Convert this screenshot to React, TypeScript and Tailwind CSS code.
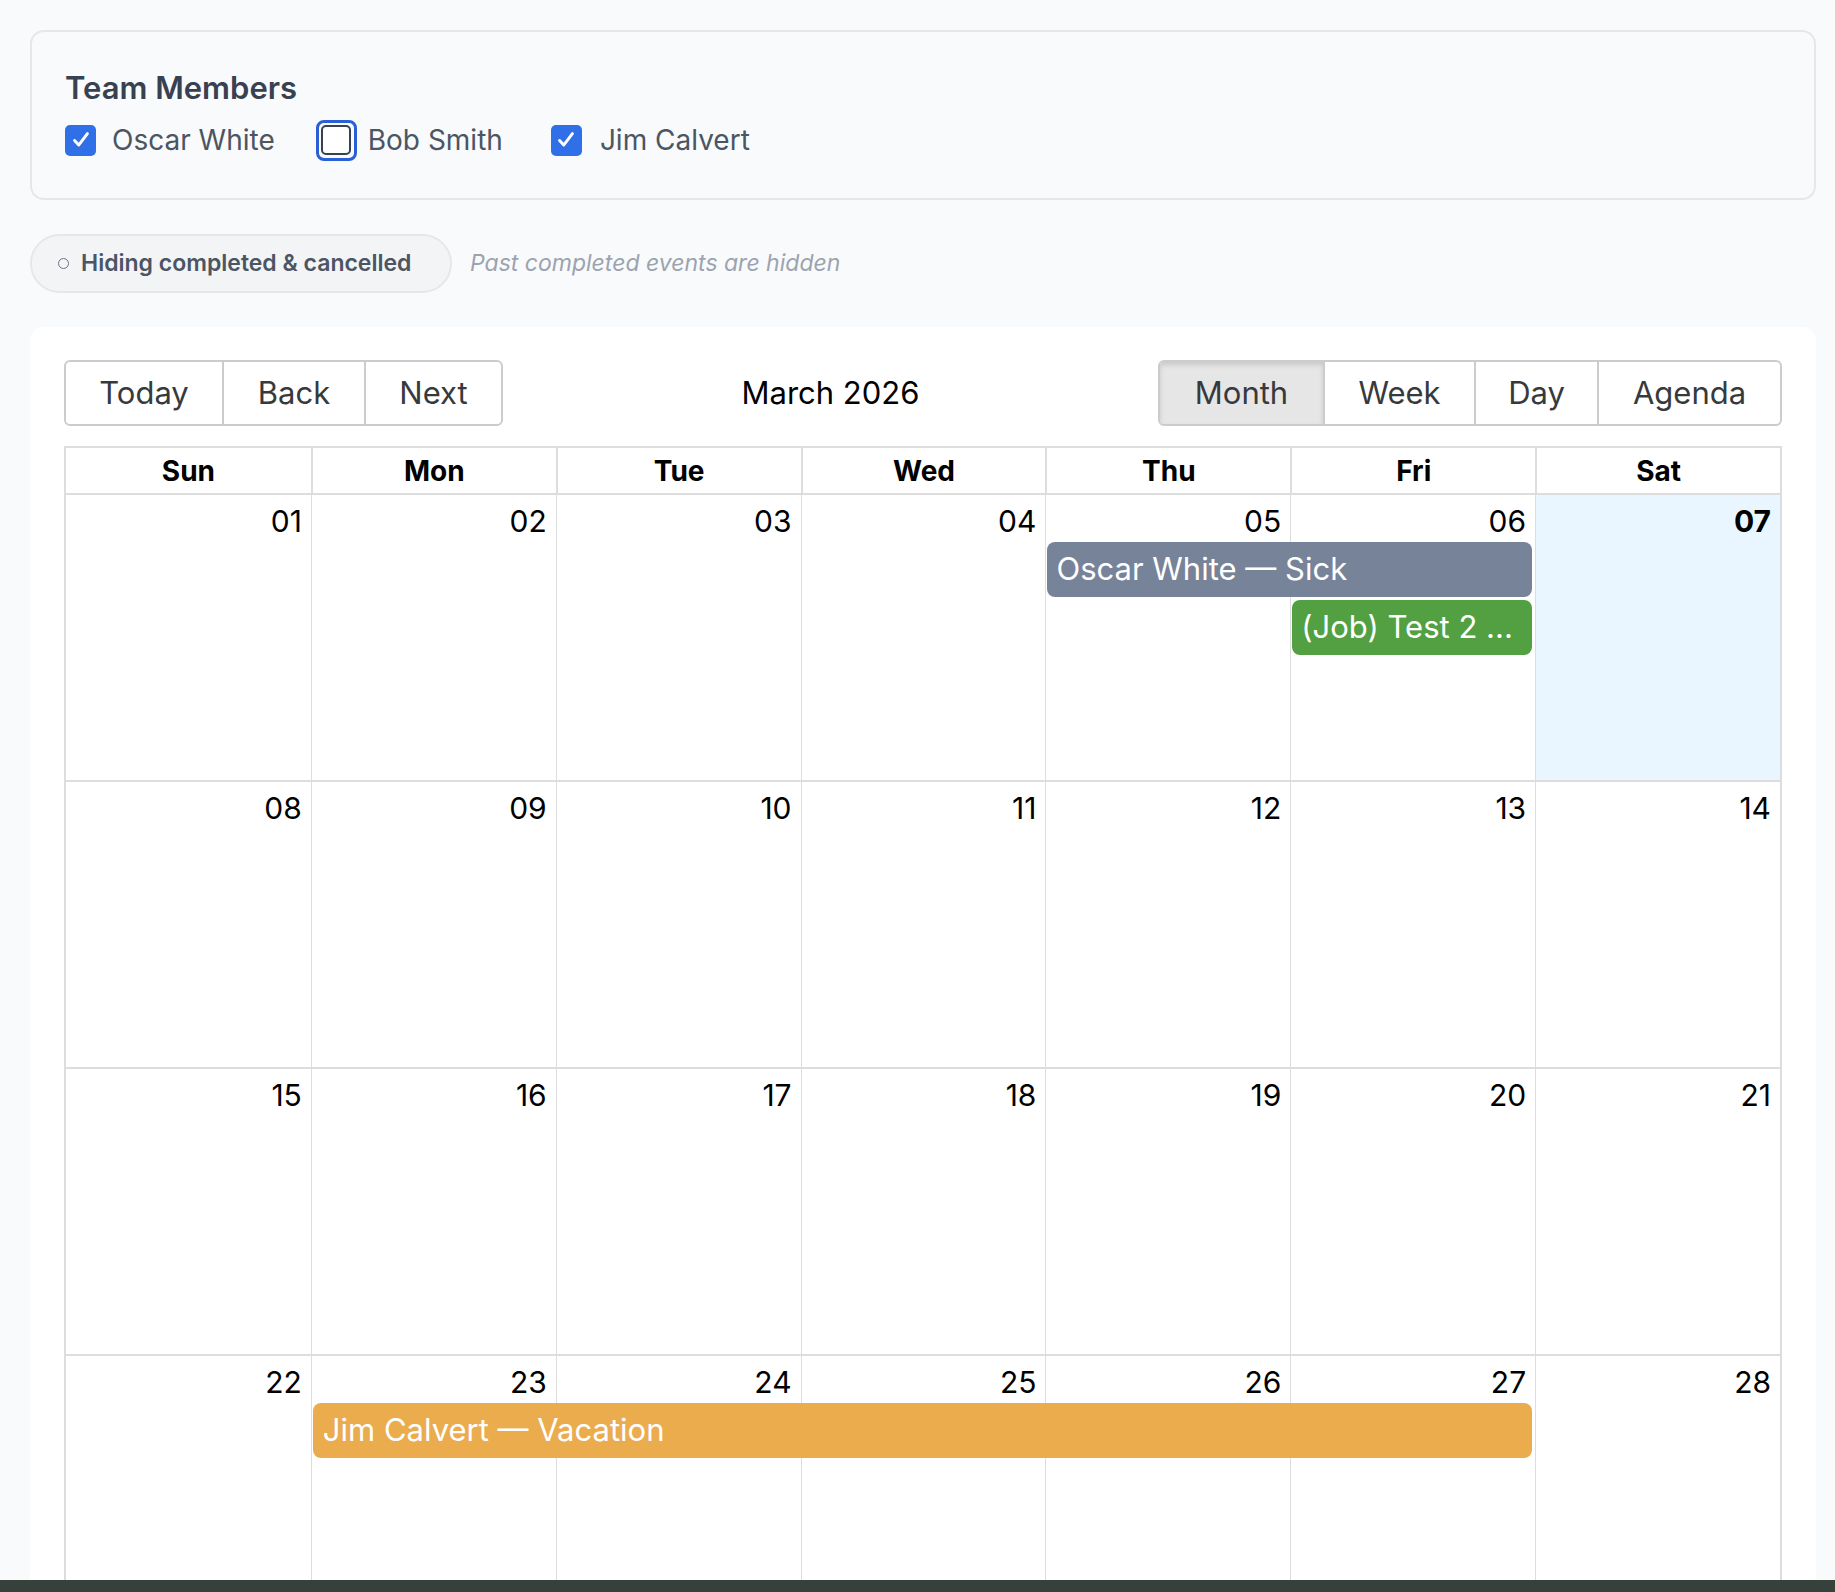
import React from "react";

const days = ["Sun", "Mon", "Tue", "Wed", "Thu", "Fri", "Sat"];
const weeks = [
  ["01", "02", "03", "04", "05", "06", "07"],
  ["08", "09", "10", "11", "12", "13", "14"],
  ["15", "16", "17", "18", "19", "20", "21"],
  ["22", "23", "24", "25", "26", "27", "28"],
];

function Check({ on }: { on: boolean }) {
  if (on)
    return (
      <span className="w-[31px] h-[31px] rounded-[5px] bg-[#2f6fe8] flex items-center justify-center">
        <svg width="22" height="22" viewBox="0 0 24 24" fill="none" stroke="white" strokeWidth="3.2" strokeLinecap="round" strokeLinejoin="round">
          <path d="M5 12.5l4.5 5L19 5" />
        </svg>
      </span>
    );
  return (
    <span className="w-[41px] h-[41px] rounded-[8px] border-[3px] border-[#2a5fd6] flex items-center justify-center">
      <span className="w-[30px] h-[30px] rounded-[5px] border-2 border-[#374151] bg-white" />
    </span>
  );
}

export default function App() {
  const font = { fontFamily: "Inter, 'Noto Sans', sans-serif" };
  return (
    <div style={font} className="w-[1835px] h-[1592px] bg-[#f8fafc] overflow-hidden flex flex-col">
      <div className="flex-1 flex flex-col pt-[30px] pl-[30px] pr-[19px] overflow-hidden">
        <div className="h-[170px] rounded-[14px] border-2 border-[#e5e7eb] bg-[#f9fafb] px-[33px] pt-[30px] shrink-0">
          <div className="text-[31px] font-semibold text-[#374151] leading-[52px]">Team Members</div>
          <div className="flex items-center mt-[4px] h-[44px] text-[28px] text-[#4b5563]">
            <Check on />
            <span className="ml-[16px]">Oscar White</span>
            <span className="ml-[41px]"><Check on={false} /></span>
            <span className="ml-[11px]">Bob Smith</span>
            <span className="ml-[48px]"><Check on /></span>
            <span className="ml-[18px]">Jim Calvert</span>
          </div>
        </div>

        <div className="flex items-center mt-[34px] shrink-0">
          <div className="h-[59px] w-[422px] rounded-full border-2 border-[#e5e7eb] bg-[#f3f4f6] flex items-center pl-[26px] text-[23px] font-semibold text-[#4b5563]">
            <span className="w-[11px] h-[11px] rounded-full border-[1.5px] border-[#6b7280] mr-[12px]" />
            Hiding completed &amp; cancelled
          </div>
          <div className="ml-[18px] italic text-[23px] text-[#9ca3af]">Past completed events are hidden</div>
        </div>

        <div className="mt-[34px] flex-1 bg-white rounded-t-[14px] px-[34px] pt-[33px]">
          <div className="flex items-center h-[66px] text-[31px] text-[#373a3c]">
            <div className="flex h-full border-2 border-[#cccccc] rounded-[6px] overflow-hidden">
              <div className="w-[156px] flex items-center justify-center">Today</div>
              <div className="w-[142px] flex items-center justify-center border-l-2 border-[#cccccc]">Back</div>
              <div className="w-[137px] flex items-center justify-center border-l-2 border-[#cccccc]">Next</div>
            </div>
            <div className="flex-1 text-center text-[31px] text-black">March 2026</div>
            <div className="flex h-full border-2 border-[#cccccc] rounded-[6px] overflow-hidden">
              <div className="w-[163px] flex items-center justify-center bg-[#e6e6e6] shadow-[inset_0_3px_5px_rgba(0,0,0,0.125)]">Month</div>
              <div className="w-[151px] flex items-center justify-center border-l-2 border-[#cccccc]">Week</div>
              <div className="w-[123px] flex items-center justify-center border-l-2 border-[#cccccc]">Day</div>
              <div className="w-[183px] flex items-center justify-center border-l-2 border-[#cccccc]">Agenda</div>
            </div>
          </div>

          <div className="mt-[20px] border-2 border-[#dddddd] border-b-0">
            <div className="grid grid-cols-7 h-[45px]">
              {days.map((d, i) => (
                <div key={d} className={`flex items-center justify-center text-[28px] font-bold text-black ${i > 0 ? "border-l-2 border-[#dddddd]" : ""}`}>{d}</div>
              ))}
            </div>
            {weeks.map((w, wi) => (
              <div key={wi} className="relative h-[287px] border-t-2 border-[#dddddd]">
                <div className="grid grid-cols-7 h-full">
                  {w.map((d, i) => (
                    <div key={d} className={`text-right pr-[9px] pt-[4px] text-[30px] text-black ${i > 0 ? "border-l border-[#dddddd]" : ""} ${d === "07" ? "bg-[#eaf6ff] font-bold" : ""}`}>{d}</div>
                  ))}
                </div>
                {wi === 0 && (
                  <>
                    <div className="absolute top-[47px] left-[calc(400%/7+2px)] w-[calc(200%/7-5px)] h-[55px] rounded-[8px] bg-[#778399] text-white text-[31px] flex items-center px-[9px]">Oscar White — Sick</div>
                    <div className="absolute top-[105px] left-[calc(500%/7+2px)] w-[calc(100%/7-5px)] h-[55px] rounded-[8px] bg-[#52a041] text-white text-[31px] flex items-center px-[9px] whitespace-nowrap overflow-hidden">(Job) Test 2 ...</div>
                  </>
                )}
                {wi === 3 && (
                  <div className="absolute top-[47px] left-[calc(100%/7+2px)] w-[calc(500%/7-5px)] h-[55px] rounded-[8px] bg-[#ebac4e] text-white text-[31px] flex items-center px-[10px]">Jim Calvert — Vacation</div>
                )}
              </div>
            ))}
          </div>
        </div>
      </div>
      <div className="h-[12px] shrink-0 bg-[#36413b]" />
    </div>
  );
}
